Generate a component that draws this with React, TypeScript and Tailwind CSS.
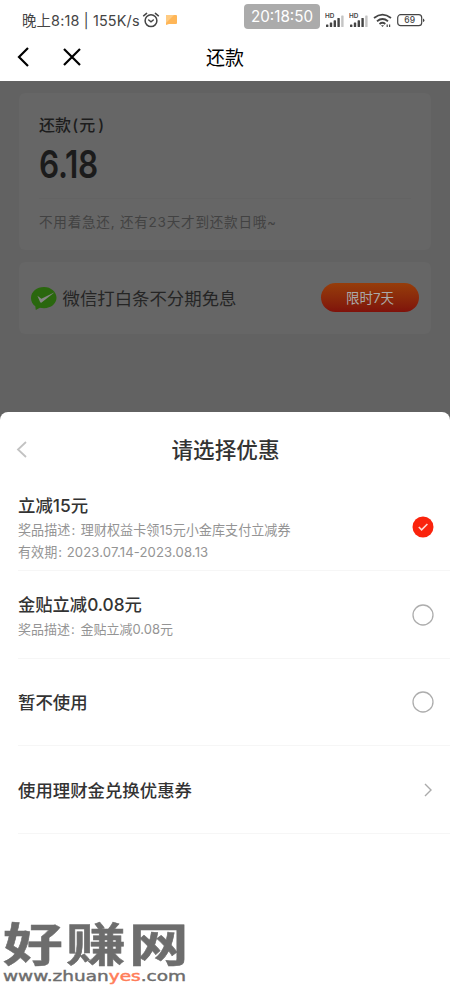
import React from 'react';

const Signal = () => (
  <svg className="h-[15px] w-[21px] shrink-0" viewBox="0 0 21 15">
    <text x="0" y="5.4" fontSize="6.4" fontWeight="600" fontFamily="Inter, sans-serif" fill="#444">HD</text>
    <g fill="#444">
      <rect x="1" y="11.5" width="2.4" height="2.5" rx=".6" />
      <rect x="4.8" y="9.5" width="2.4" height="4.5" rx=".6" />
      <rect x="8.6" y="7.3" width="2.4" height="6.7" rx=".6" />
      <rect x="12.4" y="5" width="2.4" height="9" rx=".6" />
    </g>
    <rect x="16.2" y="2.4" width="2.4" height="11.6" rx=".6" fill="#c4c4c4" />
  </svg>
);

const Radio = ({ checked = false }: { checked?: boolean }) =>
  checked ? (
    <svg className="size-[22px] shrink-0" viewBox="0 0 22 22" fill="none">
      <circle cx="11" cy="11" r="10.5" fill="#fa230c" />
      <path d="M6.8 11l2.8 2.8 5.8-5.8" stroke="#ffd9d3" strokeWidth="1.6" />
    </svg>
  ) : (
    <svg className="size-[22px] shrink-0" viewBox="0 0 22 22" fill="none">
      <circle cx="11" cy="11" r="10" stroke="#adadad" strokeWidth="1.3" />
    </svg>
  );

const Row = ({ children, end }: { children: React.ReactNode; end: React.ReactNode }) => (
  <div className="ml-[18px] flex h-[87.4px] items-center justify-between border-b border-[#f6f6f6] pr-4">
    {children}
    {end}
  </div>
);

export default function App() {
  return (
    <div className="relative flex h-[1000px] w-[450px] flex-col overflow-hidden bg-white font-['Inter','Noto_Sans_CJK_SC',sans-serif] whitespace-nowrap text-[#333]">
      <header className="h-[81px] shrink-0 bg-white">
        <div className="flex h-[36px] items-center pt-[4px] pl-[22px]">
          <span className="w-[120px] pt-[2px] text-[14.4px] leading-5 tracking-[0.16px] text-[#444]">晚上8:18 | 155K/s</span>
          <svg className="h-[16px] w-[18px]" viewBox="0 0 18 16" fill="none" stroke="#444" strokeWidth="1.5" strokeLinecap="round">
            <circle cx="9" cy="8.7" r="5.9" />
            <path d="M1.6 3.8L4.6 1.4M16.4 3.8L13.4 1.4M6.7 8l2.3 1.8L11.3 8" />
          </svg>
          <svg className="ml-[6px] h-[10px] w-[11px]" viewBox="0 0 11 10">
            <path d="M1 0h9q1 0 1 1v7q0 1-1 1H3L0 10V1q0-1 1-1" fill="#ffb657" />
            <path d="M0 8L8 0H1Q0 0 0 1z" fill="#ffcb82" />
          </svg>
          <span className="-mt-[7px] ml-[67px] flex h-[25px] w-[76px] items-center justify-center rounded-[4px] bg-[#ababab] pt-[2px] text-[15.2px] text-white">20:18:50</span>
          <div className="ml-[5px] flex gap-[3px]"><Signal /><Signal /></div>
          <svg className="ml-[3px] h-[15px] w-[20px]" viewBox="0 0 20 15" fill="none" stroke="#444" strokeWidth="1.8">
            <path d="M1 5Q9.5-1.8 18 5M4 8.2Q9.5 3.8 15 8.2M6.5 11Q9.5 8.6 12.3 11" />
            <path d="M8 12.2L9.5 14l1.5-1.8z" fill="#444" stroke="none" />
            <path d="M14.2 11.5v2.5M16.6 11.5v2.5" strokeWidth="1.2" />
          </svg>
          <svg className="ml-[4px] h-[14px] w-[29px] translate-y-[0.5px]" viewBox="0 0 29 14">
            <rect x=".7" y="1.2" width="24" height="11" rx="3" fill="none" stroke="#444" strokeWidth="1.2" />
            <path d="M26 5v3.5q1.4-.3 1.4-1.7T26 5" fill="#444" />
            <text x="12.7" y="9.9" textAnchor="middle" fontSize="8.5" fontWeight="500" fontFamily="Inter, sans-serif" fill="#444">69</text>
          </svg>
        </div>
        <div className="grid h-[42px] grid-cols-[96px_1fr_96px] items-center">
          <div className="flex items-center pl-[17px]">
            <svg className="h-[20px] w-[13px]" viewBox="0 0 13 20" fill="none" stroke="#000" strokeWidth="2.2"><path d="M11 1L2 10l9 9" /></svg>
            <svg className="ml-[33px] size-[18px]" viewBox="0 0 18 18" fill="none" stroke="#000" strokeWidth="2.2"><path d="M1 1l16 16M17 1L1 17" /></svg>
          </div>
          <h1 className="pt-[4px] text-center text-[19px] text-black">还款</h1>
        </div>
      </header>

      <main className="flex h-[331px] shrink-0 flex-col gap-[12px] bg-[#626262] px-[19px] pt-[12px]">
        <section className="h-[157px] rounded-[6px] bg-[#666] px-[20px] pt-[19px]">
          <h2 className="text-[16px] leading-[26px] font-medium tracking-[0.1px] text-[#1d1d1d]">还款<span className="mx-[1px]">(</span>元<span className="ml-[3px]">)</span></h2>
          <div className="mt-[6px] h-[40px] origin-left scale-x-[.83] text-[38px] leading-[40px] font-semibold tracking-[-0.3px] text-[#1b1b1b]">6.18</div>
          <div className="mt-[14px] border-t border-[#636363]" />
          <p className="mt-[13px] text-[13.6px] leading-5 tracking-[0.74px] text-[#424242]">不用着急还, 还有23天才到还款日哦~</p>
        </section>
        <section className="flex h-[72px] items-center rounded-[6px] bg-[#666] pr-[12px] pl-[12px]">
          <svg className="h-[24px] w-[26px]" viewBox="0 0 26 24">
            <path d="M13 1C6 1 0 5.5 0 12c0 3.6 1.7 6.3 4.3 8.3L4.8 24l4.1-2.3c1.3.3 2.7.5 4.1.5 7 0 12.5-4.6 12.5-10.4S20 1 13 1z" fill="#2a670e" />
            <path d="M6.4 9.8l4 2.9L23.6 6.3 10.6 16.5q-1 .5-1.5-.6z" fill="#858585" />
          </svg>
          <span className="ml-[5.5px] pt-[2px] text-[17.4px] text-[#252525]">微信打白条不分期免息</span>
          <button className="-mt-px ml-auto h-[29px] w-[98px] rounded-full bg-gradient-to-b from-[#963d0a] to-[#7f120b] pt-px text-[13.5px] text-[#aaa]">限时7天</button>
        </section>
      </main>

      <section className="flex-1 bg-[#626262]">
        <div className="h-full rounded-t-[8px] bg-white">
          <div className="grid h-[72px] grid-cols-[60px_1fr_60px] items-center pt-[4px]">
            <svg className="-mt-[2px] ml-[16px] h-[17px] w-[12px]" viewBox="0 0 12 17" fill="none" stroke="#c2c2c2" strokeWidth="1.8"><path d="M10 1L2 8.5 10 16" /></svg>
            <h2 className="pt-px pl-px text-center text-[21.6px] font-medium">请选择优惠</h2>
          </div>
          <Row end={<Radio checked />}>
            <div className="pt-[2px]">
              <h3 className="text-[17.4px] leading-[26px] font-medium">立减15元</h3>
              <p className="text-[13.1px] leading-[22px] text-[#949494]">奖品描述<span className="mr-[2px] ml-px">:</span> 理财权益卡领15元小金库支付立减券</p>
              <p className="text-[13.1px] leading-[22px] text-[#949494]">有效期<span className="mr-px ml-px">:</span> <span className="tracking-[0.13px]">2023.07.14-2023.08.13</span></p>
            </div>
          </Row>
          <Row end={<Radio />}>
            <div className="pt-[2px]">
              <h3 className="text-[17.3px] leading-[26px] font-medium">金贴立减0.08元</h3>
              <p className="text-[13px] leading-[22px] text-[#949494]">奖品描述<span className="mr-[2px] ml-px">:</span> 金贴立减0.08元</p>
            </div>
          </Row>
          <Row end={<Radio />}><h3 className="pt-[3px] text-[17.4px] font-medium">暂不使用</h3></Row>
          <Row end={<svg className="mt-px mr-px h-[14px] w-[10px]" viewBox="0 0 10 14" fill="none" stroke="#aaa" strokeWidth="1.4"><path d="M2 1l6 6-6 6" /></svg>}>
            <h3 className="pt-[3px] text-[17.4px] font-medium">使用理财金兑换优惠券</h3>
          </Row>
        </div>
      </section>

      <div className="absolute top-[919px] left-[3px] h-[66px] w-[188px] text-[#6d6d6d]">
        <div className="h-[49px] w-[150px] origin-left scale-x-[1.3] font-['Noto_Sans_CJK_SC',sans-serif] text-[46px] leading-[45px] font-bold tracking-[2.4px] [-webkit-text-stroke:0.5px_#6d6d6d]">好赚网</div>
        <div className="h-[17px] w-[140px] origin-left scale-x-[1.34] font-['DejaVu_Sans',sans-serif] text-[13.8px] leading-[17px] [-webkit-text-stroke:0.4px_#6d6d6d]">www.zhuan<span className="text-[#ff7d59] [-webkit-text-stroke:0.5px_#ff7d59]">yes</span>.com</div>
      </div>
    </div>
  );
}
